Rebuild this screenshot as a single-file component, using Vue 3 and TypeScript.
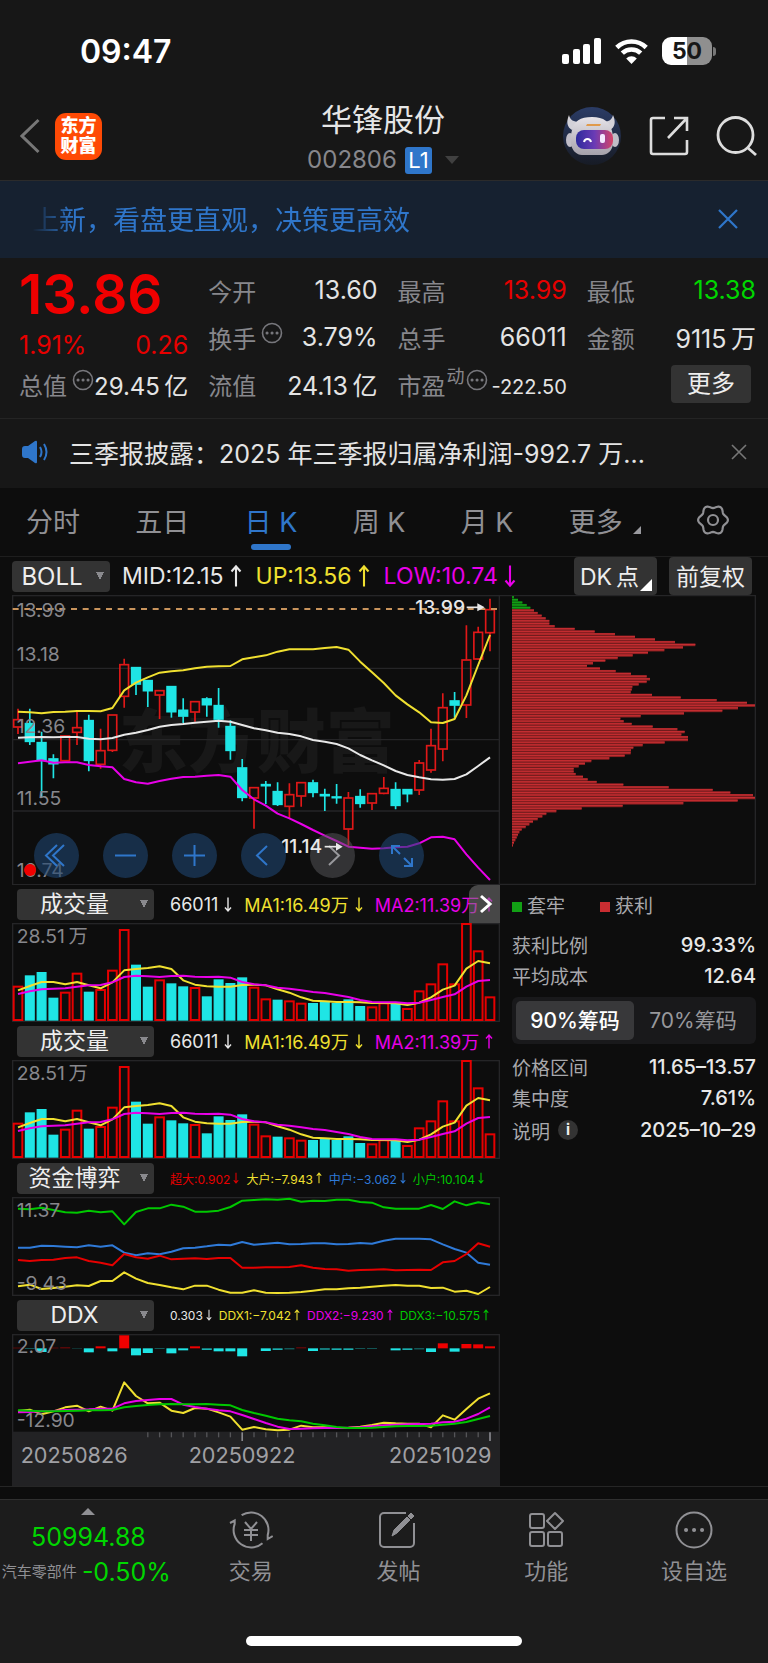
<script setup lang="ts">
import { ref } from 'vue'

type Candle = [kind: 'r' | 'c', high: number, top: number, bottom: number, low: number]

const START = 54
const STEP = 35.4
const xAt = (i: number): number => START + STEP * i
const line = (ys: number[]): string => ys.map((y, i) => `${xAt(i).toFixed(1)},${y}`).join(' ')

const candles: Candle[] = [
  ['r', 356, 388, 412, 432], ['c', 356, 400, 455, 465], ['c', 425, 457, 512, 622],
  ['c', 493, 506, 522, 565], ['r', 437, 437, 513, 513], ['r', 362, 412, 428, 465],
  ['c', 374, 391, 512, 544], ['r', 416, 481, 524, 536], ['r', 374, 374, 482, 486],
  ['r', 206, 223, 320, 353], ['c', 232, 232, 283, 315], ['c', 271, 271, 303, 351],
  ['r', 301, 301, 316, 387], ['c', 289, 289, 366, 383], ['c', 325, 360, 379, 399],
  ['r', 334, 334, 367, 395], ['c', 322, 326, 345, 380], ['c', 294, 346, 388, 413],
  ['c', 391, 409, 482, 509], ['c', 507, 533, 623, 634], ['r', 592, 592, 625, 716],
  ['c', 573, 583, 588, 642], ['c', 577, 604, 644, 648], ['r', 580, 613, 650, 685],
  ['r', 576, 577, 619, 650], ['c', 569, 578, 608, 622], ['c', 596, 613, 618, 663],
  ['c', 582, 620, 624, 641], ['r', 606, 623, 718, 767], ['c', 598, 619, 641, 653],
  ['r', 610, 610, 640, 660], ['r', 561, 594, 611, 613], ['c', 577, 598, 647, 658],
  ['c', 598, 598, 612, 637], ['r', 510, 518, 601, 615], ['r', 416, 466, 541, 548],
  ['r', 310, 352, 478, 514], ['c', 306, 332, 346, 383], ['r', 106, 209, 346, 384],
  ['r', 110, 126, 208, 209], ['r', 26, 58, 129, 184],
]

const bollUp = [365, 367, 370, 366, 365, 363, 363, 364, 354, 301, 278, 262, 248, 244, 241, 235, 230, 229, 228, 208, 202, 196, 185, 178, 178, 178, 174, 171, 179, 215, 247, 279, 316, 343, 367, 397, 399, 387, 316, 225, 135]
const bollMid = [443, 442, 441, 442, 441, 441, 446, 448, 444, 434, 428, 420, 410, 405, 402, 398, 395, 392, 395, 405, 415, 421, 428, 432, 439, 450, 455, 462, 475, 495, 511, 526, 543, 555, 562, 568, 569, 567, 553, 528, 502]
const bollLow = [520, 515, 511, 518, 517, 517, 525, 529, 532, 567, 577, 581, 573, 566, 561, 560, 557, 555, 560, 600, 628, 647, 671, 685, 702, 720, 737, 753, 770, 773, 776, 775, 772, 770, 760, 742, 740, 748, 793, 833, 870]

const volTops = [320, 288, 278, 355, 338, 281, 337, 330, 272, 150, 256, 322, 301, 312, 321, 324, 351, 300, 311, 294, 323, 358, 361, 364, 371, 371, 365, 371, 360, 380, 382, 370, 371, 387, 334, 313, 253, 313, 132, 214, 352]
const volKinds = 'rcccrrcrrrccrccrccccrrcrrcccccrrcrrrrrrrr'.split('')
const ma1 = [331, 318, 306, 306, 313, 306, 316, 325, 307, 271, 267, 264, 259, 267, 301, 314, 319, 320, 320, 315, 314, 316, 328, 338, 352, 362, 364, 366, 366, 367, 369, 369, 370, 375, 368, 352, 329, 317, 266, 243, 250]
const ma2 = [342, 334, 328, 326, 325, 320, 316, 315, 307, 291, 287, 289, 291, 288, 287, 290, 291, 290, 293, 306, 313, 316, 323, 326, 331, 336, 339, 345, 351, 360, 366, 367, 367, 370, 368, 360, 351, 343, 320, 303, 300]

const flowSmall = [144, 146, 141, 148, 155, 156, 150, 155, 152, 191, 154, 143, 143, 132, 138, 153, 153, 150, 139, 120, 118, 116, 117, 114, 123, 120, 121, 117, 117, 124, 126, 140, 144, 144, 144, 133, 145, 122, 134, 125, 131]
const flowMid = [261, 261, 255, 256, 258, 260, 254, 258, 254, 276, 284, 278, 281, 273, 263, 261, 257, 252, 254, 244, 252, 249, 246, 251, 250, 248, 248, 251, 250, 247, 249, 240, 234, 234, 234, 236, 251, 265, 276, 306, 312]
const flowHuge = [298, 301, 298, 297, 292, 290, 301, 306, 314, 280, 290, 294, 285, 296, 294, 293, 295, 292, 292, 321, 321, 320, 320, 319, 314, 321, 325, 326, 330, 328, 327, 326, 329, 328, 327, 328, 305, 301, 280, 248, 258]
const flowBig = [377, 372, 385, 382, 378, 374, 376, 361, 361, 335, 354, 367, 373, 380, 386, 375, 375, 387, 396, 396, 389, 396, 397, 396, 394, 390, 386, 386, 383, 381, 378, 375, 373, 375, 375, 382, 381, 393, 390, 400, 379]

const ddxBars = [-2, 2, 11, -2, -3, 1, 12, -6, 9, -39, 21, 14, 2, 15, 6, -6, 5, 9, 9, 24, 0, 8, 5, 3, -3, 8, 4, 5, 5, 2, 2, 0, 6, 5, 3, 11, -15, 10, -13, -12, -6]
const ddx1 = [302, 298, 312, 303, 291, 286, 303, 289, 301, 216, 257, 279, 277, 301, 308, 293, 295, 306, 319, 358, 350, 357, 360, 358, 346, 351, 351, 353, 352, 349, 344, 337, 339, 340, 340, 351, 315, 328, 296, 265, 249]
const ddx2 = [306, 305, 303, 302, 299, 298, 297, 295, 295, 279, 272, 269, 266, 266, 283, 290, 295, 300, 303, 314, 326, 338, 349, 356, 355, 354, 353, 353, 352, 351, 348, 345, 343, 342, 341, 340, 336, 334, 325, 311, 291]
const ddx3 = [300, 301, 303, 303, 302, 301, 300, 300, 299, 291, 287, 284, 282, 281, 282, 282, 281, 283, 285, 299, 308, 316, 325, 330, 333, 340, 345, 350, 353, 353, 352, 350, 348, 347, 347, 346, 343, 340, 335, 326, 317]
const ticks = Array.from({ length: 30 }, (_, i) => i + 11)

const chips = [42, 54, 67, 80, 91, 102, 113, 125, 137, 148, 148, 164, 224, 284, 345, 405, 465, 525, 586, 549, 493, 444, 398, 353, 316, 279, 261, 300, 347, 393, 440, 450, 440, 416, 397, 395, 392, 456, 542, 650, 741, 765, 714, 667, 552, 422, 361, 371, 395, 458, 532, 554, 544, 564, 564, 494, 428, 400, 393, 392, 374, 328, 274, 255, 236, 221, 221, 227, 249, 263, 290, 370, 506, 638, 691, 759, 765, 713, 550, 368, 245, 169, 139, 127, 113, 99, 88, 77, 65, 58, 54, 50, 46, 42, 39]

const priceLabels = [
  { text: '13.99', y: 80 }, { text: '13.18', y: 212 }, { text: '12.36', y: 429 },
  { text: '11.55', y: 644 }, { text: '10.74', y: 861 },
]

// Six-lobed outline of the settings gear
const gear = 'M' + Array.from({ length: 72 }, (_, i) => {
  const a = (i * Math.PI) / 36
  const r = 13.4 + 1.5 * Math.cos(6 * a)
  return `${(17 + r * Math.cos(a)).toFixed(2)} ${(16 + r * Math.sin(a)).toFixed(2)}`
}).join('L') + 'Z'

const tabs = ['分时', '五日', '日 K', '周 K', '月 K', '更多']
const activeTab = ref(tabs[2])
const range = ref(90)
const bannerOpen = ref(true)
const noticeOpen = ref(true)

interface Reading { text: string; dir: 'up' | 'down'; tone: string }
const boll: Reading[] = [
  { text: 'MID:12.15', dir: 'up', tone: 'white' },
  { text: 'UP:13.56', dir: 'up', tone: 'yellow' },
  { text: 'LOW:10.74', dir: 'down', tone: 'magenta' },
]
const volume: Reading[] = [
  { text: '66011', dir: 'down', tone: 'white' },
  { text: 'MA1:16.49万', dir: 'down', tone: 'yellow' },
  { text: 'MA2:11.39万', dir: 'up', tone: 'magenta' },
]
const flow: Reading[] = [
  { text: '超大:0.902', dir: 'down', tone: 'red' },
  { text: '大户:−7.943', dir: 'up', tone: 'yellow' },
  { text: '中户:−3.062', dir: 'down', tone: 'blue' },
  { text: '小户:10.104', dir: 'down', tone: 'green' },
]
const ddx: Reading[] = [
  { text: '0.303', dir: 'down', tone: 'white' },
  { text: 'DDX1:−7.042', dir: 'up', tone: 'yellow' },
  { text: 'DDX2:−9.230', dir: 'up', tone: 'magenta' },
  { text: 'DDX3:−10.575', dir: 'up', tone: 'green' },
]
const UP = 'M4 15V1.5M1 5l3-3.5L7 5'
const DOWN = 'M4 1v13.500M1 11l3 3.500L7 11'
</script>

<template>
  <div class="app">
    <header class="top">
      <div class="status">
        <span class="time">09:47</span>
        <div class="status-icons">
          <svg width="39" height="26" viewBox="0 0 39 26" fill="#fff">
            <rect x="0" y="16" width="7" height="10" rx="2" /><rect x="11" y="11" width="7" height="15" rx="2" />
            <rect x="21" y="6" width="7" height="20" rx="2" /><rect x="32" y="0" width="7" height="26" rx="2" />
          </svg>
          <svg width="33" height="25" viewBox="0 0 33 25" fill="none" stroke="#fff" stroke-width="4.600">
            <path d="M1.800 8.500a21 21 0 0 1 29.400 0" /><path d="M7.300 14.200a13.200 13.200 0 0 1 18.400 0" />
            <path d="M16.500 25l-5.300-5.500a7.500 7.500 0 0 1 10.600 0z" fill="#fff" stroke="none" />
          </svg>
          <div class="battery"><span class="charge"><b>50</b></span><i></i></div>
        </div>
      </div>
      <div class="nav">
        <div class="nav-left">
          <button class="bare" aria-label="返回">
            <svg width="20" height="36" viewBox="0 0 20 36" fill="none" stroke="#777" stroke-width="3"><path d="M18.500 2L2 18l16.500 16" /></svg>
          </button>
          <a class="logo" href="#home"><span>东方</span><span>财富</span></a>
        </div>
        <div class="title">
          <h1>华锋股份</h1>
          <button class="bare code">002806 <span class="level">L1</span>
            <svg width="14" height="8" viewBox="0 0 14 8" fill="#404040"><path d="M0 0h14L7 8z" /></svg>
          </button>
        </div>
        <div class="nav-right">
          <button class="bare" aria-label="助手">
            <svg width="60" height="60" viewBox="0 0 60 60">
              <defs>
                <linearGradient id="halo" x1="0" y1="0" x2="0" y2="1"><stop offset="0" stop-color="#2b3c66" /><stop offset="1" stop-color="#171b25" /></linearGradient>
                <linearGradient id="visor" x1="0" y1="0" x2="1" y2="0"><stop offset="0" stop-color="#2d2a9c" /><stop offset=".5" stop-color="#6a3bb5" /><stop offset="1" stop-color="#d54468" /></linearGradient>
                <linearGradient id="shell" x1="0" y1="0" x2="0" y2="1"><stop offset="0" stop-color="#e6e3e8" /><stop offset="1" stop-color="#a5a1ab" /></linearGradient>
              </defs>
              <circle cx="30" cy="30" r="29" fill="url(#halo)" />
              <path d="M7 9c-3 7-2 12 3 15l7-8c-5 0-9-2-10-7zM51 9c3 7 2 12-3 15l-7-8c5 0 9-2 10-7z" fill="#d3d1d8" />
              <ellipse cx="8" cy="34" rx="4" ry="7" fill="#c0bdc7" /><ellipse cx="53" cy="34" rx="4" ry="7" fill="#c0bdc7" />
              <path d="M30 11c12 0 18 5 20 14 3 12 1 23-10 24H20C9 48 7 36 10 24c2-9 8-13 20-13z" fill="url(#shell)" />
              <rect x="14" y="24" width="37" height="19" rx="8" fill="url(#visor)" />
              <path d="M22 36c1-4 6-4 7 0" fill="none" stroke="#fff" stroke-width="2" /><rect x="38" y="28" width="5" height="9" rx="2" fill="#f3e9ff" />
              <path d="M25 18h14l-1 2H24z" fill="#e09a4c" />
            </svg>
          </button>
          <button class="bare" aria-label="分享">
            <svg width="42" height="42" viewBox="0 0 42 42" fill="none" stroke="#ddd" stroke-width="2.600">
              <path d="M17 3H5a2 2 0 0 0-2 2v32a2 2 0 0 0 2 2h32a2 2 0 0 0 2-2V25" /><path d="M26 3h13v13M39 3L20 23" />
            </svg>
          </button>
          <button class="bare" aria-label="搜索">
            <svg width="42" height="42" viewBox="0 0 42 42" fill="none" stroke="#ddd" stroke-width="2.800">
              <circle cx="19.500" cy="20" r="17.500" /><path d="M32 33l8 7" />
            </svg>
          </button>
        </div>
      </div>
    </header>

    <div v-if="bannerOpen" class="banner">
      <a href="#new">上新，看盘更直观，决策更高效</a>
      <button class="bare" aria-label="关闭横幅" @click="bannerOpen = false">
        <svg width="20" height="20" viewBox="0 0 20 20" stroke="#2f76ca" stroke-width="2.200"><path d="M1 1l18 18M19 1L1 19" /></svg>
      </button>
    </div>

    <section class="quote">
      <div class="col">
        <strong class="price">13.86</strong>
        <div class="change"><span>1.91%</span><span>0.26</span></div>
        <div class="cell"><span class="label">总值</span><svg class="more-dot gap" width="22" height="22" viewBox="0 0 22 22"><circle cx="11" cy="11" r="9.500" /><path d="M6 11h.1M11 11h.1M16 11h.1" /></svg><span class="value tight">29.45&#8201;亿</span></div>
      </div>
      <div class="col">
        <div class="cell"><span class="label">今开</span><span class="value">13.60</span></div>
        <div class="cell"><span class="label">换手</span><svg class="more-dot gap" width="22" height="22" viewBox="0 0 22 22"><circle cx="11" cy="11" r="9.500" /><path d="M6 11h.1M11 11h.1M16 11h.1" /></svg><span class="value">3.79%</span></div>
        <div class="cell"><span class="label">流值</span><span class="value">24.13&#8201;亿</span></div>
      </div>
      <div class="col">
        <div class="cell"><span class="label">最高</span><span class="value rise">13.99</span></div>
        <div class="cell"><span class="label">总手</span><span class="value">66011</span></div>
        <div class="cell"><span class="label">市盈</span><sup class="sup">动</sup><svg class="more-dot" width="22" height="22" viewBox="0 0 22 22"><circle cx="11" cy="11" r="9.500" /><path d="M6 11h.1M11 11h.1M16 11h.1" /></svg><span class="value small">-222.50</span></div>
      </div>
      <div class="col">
        <div class="cell"><span class="label">最低</span><span class="value fall">13.38</span></div>
        <div class="cell"><span class="label">金额</span><span class="value">9115&#8201;万</span></div>
        <div class="cell"><button class="more">更多</button></div>
      </div>
    </section>

    <div v-if="noticeOpen" class="notice">
      <svg width="28" height="24" viewBox="0 0 28 24" fill="none" stroke="#2f76ca" stroke-width="2">
        <path d="M1 9q0-3 3-3h3l7-5q2-1 2 1v20q0 2-2 1l-7-5H4q-3 0-3-3z" fill="#2f76ca" stroke="none" /><path d="M19 7q3 5 0 10M23 4q5 8 0 16" />
      </svg>
      <a href="#report">三季报披露：2025 年三季报归属净利润-992.7 万...</a>
      <button class="bare" aria-label="关闭公告" @click="noticeOpen = false">
        <svg width="16" height="16" viewBox="0 0 16 16" stroke="#777" stroke-width="1.600"><path d="M1 1l14 14M15 1L1 15" /></svg>
      </button>
    </div>

    <nav class="tabs">
      <button v-for="t in tabs" :key="t" class="tab" :class="{ active: t === activeTab }" @click="activeTab = t">
        {{ t }}<svg v-if="t === '更多'" class="corner" width="8" height="8" viewBox="0 0 8 8"><path d="M8 0v8H0z" fill="#9a9a9f" /></svg>
      </button>
      <button class="tab" aria-label="设置">
        <svg width="34" height="32" viewBox="0 0 34 32" fill="none" stroke="#909094" stroke-width="2.200">
          <path :d="gear" stroke-linejoin="round" /><circle cx="17" cy="16" r="5" />
        </svg>
      </button>
    </nav>

    <div class="boll">
      <select class="pick boll-pick" aria-label="主图指标"><option>BOLL</option></select>
      <div class="readings big">
        <span v-for="r in boll" :key="r.text" :class="r.tone">{{ r.text }}<svg width="12" height="24" viewBox="0 0 8 16"><path :d="r.dir === 'up' ? UP : DOWN" /></svg></span>
      </div>
      <div class="boll-actions">
        <button class="chip-btn dk">DK&#8201;点<svg class="corner" width="12" height="12" viewBox="0 0 12 12"><path d="M12 0v12H0z" fill="#fff" /></svg></button>
        <button class="chip-btn">前复权</button>
      </div>
    </div>

    <main class="board">
      <div class="left">
        <div class="price-chart">
          <svg class="plot" viewBox="36 15 1464 870">
            <text class="watermark" x="356" y="530">东方财富</text>
            <path class="grid" d="M38 235H1498M38 449H1498M38 663H1498" />
            <rect class="frame" x="38" y="17" width="1460" height="867" />
            <g v-for="(c, i) in candles" :key="i" :class="c[0] === 'r' ? 'up-bar' : 'down-bar'">
              <path :d="`M${xAt(i)} ${c[1]}V${c[2]}M${xAt(i)} ${c[3]}V${c[4]}`" />
              <rect :x="xAt(i) - 13" :y="c[2] + 1" width="26" :height="c[3] - c[2] - 2" />
            </g>
            <path class="dash" d="M38 57H1498" />
            <polyline class="yellow" :points="line(bollUp)" />
            <polyline class="white" :points="line(bollMid)" />
            <polyline class="magenta" :points="line(bollLow)" />
            <text v-for="l in priceLabels" :key="l.text" class="axis" x="50" :y="l.y">{{ l.text }}</text>
          </svg>
          <div class="tools">
            <button aria-label="最早"><svg viewBox="0 0 45 45"><path d="M23 12L12 22.500 23 33M30 12L19 22.500 30 33" /></svg></button>
            <button aria-label="缩小"><svg viewBox="0 0 45 45"><path d="M12 22.500h21" /></svg></button>
            <button aria-label="放大"><svg viewBox="0 0 45 45"><path d="M12 22.500h21M22.500 12v21" /></svg></button>
            <button aria-label="向左"><svg viewBox="0 0 45 45"><path d="M26 13L16 22.500 26 32" /></svg></button>
            <button class="muted" aria-label="向右"><svg viewBox="0 0 45 45"><path d="M19 13l10 9.500L19 32" /></svg></button>
            <button aria-label="全屏"><svg viewBox="0 0 45 45"><path d="M13 21v-8h8M13 13l8 8M33 25v8h-8M33 33l-8-8" /></svg></button>
          </div>
          <svg class="plot marks" viewBox="36 15 1464 870">
            <text class="mark" x="1246" y="73">13.99</text><path d="M1400 52h38" /><path class="tip" d="M1432 40l22 12-22 12z" />
            <text class="mark" x="844" y="790">11.14</text><path d="M974 770h38" /><path class="tip" d="M1008 758l20 12-20 12z" />
            <circle cx="90" cy="840" r="18" fill="#f00000" />
          </svg>
        </div>

        <div v-for="n in 2" :key="n" class="pane">
          <div class="pane-head">
            <select class="pick" :aria-label="`副图指标 ${n}`"><option>成交量</option></select>
            <div class="readings mid">
              <span v-for="r in volume" :key="r.text" :class="r.tone">{{ r.text }}<svg width="8" height="17" viewBox="0 0 8 16"><path :d="r.dir === 'up' ? UP : DOWN" /></svg></span>
            </div>
            <button v-if="n === 1" class="expand" aria-label="展开">
              <svg width="14" height="20" viewBox="0 0 14 20" fill="none" stroke="#fff" stroke-width="3"><path d="M2 2l9 8-9 8" /></svg>
            </button>
          </div>
          <svg class="plot" viewBox="36 129 1464 297">
            <rect class="frame" x="38" y="131" width="1460" height="293" />
            <g v-for="(t, i) in volTops" :key="i" :class="volKinds[i] === 'r' ? 'vol-up' : 'vol-down'">
              <rect :x="xAt(i) - 13" :y="t" width="26" :height="420 - t" />
            </g>
            <polyline class="yellow" :points="line(ma1)" /><polyline class="magenta" :points="line(ma2)" />
            <text class="axis" x="50" y="189">28.51&#8201;万</text>
          </svg>
        </div>

        <div class="pane">
          <div class="pane-head">
            <select class="pick" aria-label="副图指标 3"><option>资金博弈</option></select>
            <div class="readings tiny">
              <span v-for="r in flow" :key="r.text" :class="r.tone">{{ r.text }}<svg width="6" height="12" viewBox="0 0 8 16"><path :d="r.dir === 'up' ? UP : DOWN" /></svg></span>
            </div>
          </div>
          <svg class="plot" viewBox="36 109 1464 297">
            <rect class="frame" x="38" y="111" width="1460" height="293" />
            <polyline class="green" :points="line(flowSmall)" /><polyline class="blue" :points="line(flowMid)" />
            <polyline class="red" :points="line(flowHuge)" /><polyline class="yellow" :points="line(flowBig)" />
            <text class="axis" x="50" y="168">11.37</text><text class="axis" x="50" y="388">-9.43</text>
          </svg>
        </div>

        <div class="pane">
          <div class="pane-head">
            <select class="pick" aria-label="副图指标 4"><option>DDX</option></select>
            <div class="readings tiny">
              <span v-for="r in ddx" :key="r.text" :class="r.tone">{{ r.text }}<svg width="6" height="12" viewBox="0 0 8 16"><path :d="r.dir === 'up' ? UP : DOWN" /></svg></span>
            </div>
          </div>
          <svg class="plot" viewBox="36 71 1464 456">
            <rect class="frame" x="38" y="73" width="1460" height="300" />
            <rect x="36" y="364" width="1464" height="163" fill="#222224" />
            <rect v-for="(b, i) in ddxBars" :key="i" :x="xAt(i) - 15" :y="b < 0 ? 114 + b : 114" width="30" :height="Math.abs(b)" :fill="b < 0 ? '#f00000' : '#1fe5e5'" :opacity="Math.abs(b) < 4 ? 0.5 : Math.abs(b) < 6 ? 0.75 : 1" />
            <polyline class="yellow" :points="line(ddx1)" /><polyline class="magenta" :points="line(ddx2)" /><polyline class="green" :points="line(ddx3)" />
            <text class="axis" x="50" y="128">2.07</text><text class="axis" x="50" y="349">-12.90</text>
            <path v-for="t in ticks" :key="t" class="tick" :class="{ major: t === 19 || t === 40 }" :d="`M${xAt(t)} 366V${t === 19 || t === 40 ? 392 : 381}`" />
            <text class="date" x="62" y="457">20250826</text><text class="date" x="726" y="457" text-anchor="middle">20250922</text><text class="date" x="1474" y="457" text-anchor="end">20251029</text>
          </svg>
        </div>
      </div>

      <aside class="right">
        <svg class="plot" viewBox="0 15 768 870">
          <path class="frame" d="M0 17H766V883H0" />
          <g v-for="(c, i) in chips" :key="i">
            <rect x="36" :y="18 + i * 7.92" :width="c - 36" height="8" :fill="i < 5 ? '#0d7010' : '#8a2022'" />
            <rect x="36" :y="19 + i * 7.92" :width="c - 36" height="4" :fill="i < 5 ? '#12a015' : '#c42d31'" />
          </g>
        </svg>
        <div class="info">
          <div class="legend"><span class="trapped">套牢</span><span class="profit">获利</span></div>
          <dl>
            <div><dt>获利比例</dt><dd>99.33%</dd></div>
            <div><dt>平均成本</dt><dd>12.64</dd></div>
          </dl>
          <div class="segment">
            <button :class="{ on: range === 90 }" @click="range = 90">90%筹码</button>
            <button :class="{ on: range === 70 }" @click="range = 70">70%筹码</button>
          </div>
          <dl>
            <div><dt>价格区间</dt><dd>11.65–13.57</dd></div>
            <div><dt>集中度</dt><dd>7.61%</dd></div>
            <div class="note"><dt>说明<button class="bare tip-btn" aria-label="查看说明">i</button></dt><dd>2025–10–29</dd></div>
          </dl>
        </div>
      </aside>
    </main>

    <footer class="bottom">
      <div class="bar">
        <a class="sector" href="#sector">
          <svg width="14" height="7" viewBox="0 0 14 7" fill="#909094"><path d="M7 0l7 7H0z" /></svg>
          <span class="index">50994.88</span>
          <span class="drop"><small>汽车零部件</small>-0.50%</span>
        </a>
        <a class="item" href="#trade">
          <svg viewBox="0 0 44 40"><path d="M12.600 5.200A17.500 17.500 0 0 1 38.700 25.100V29l5-3M33.500 33.200A17.500 17.500 0 0 1 5.700 13.800V10.500L1 13M16 12l6 7 6-7M22 19v12M15 20h14M15 25h14" /></svg><span>交易</span>
        </a>
        <a class="item" href="#post">
          <svg viewBox="0 0 44 40"><path d="M30 3H8a4 4 0 0 0-4 4v26a4 4 0 0 0 4 4h26a4 4 0 0 0 4-4V13" /><path d="M16 26l2-6L31 7l3 3-13 13zM32 6l3-3 3 3-3 3z" fill="#909094" stroke-width="1" /></svg><span>发帖</span>
        </a>
        <a class="item" href="#features">
          <svg viewBox="0 0 44 40"><rect x="6" y="4" width="14" height="14" rx="2" /><rect x="6" y="22" width="14" height="14" rx="2" /><rect x="24" y="22" width="14" height="14" rx="2" /><path d="M31 3l8 8-8 8-8-8z" stroke-linejoin="round" /></svg><span>功能</span>
        </a>
        <a class="item" href="#watch">
          <svg viewBox="0 0 44 40"><circle cx="22" cy="20" r="17.500" /><path d="M14 20h.1M22 20h.1M30 20h.1" stroke-width="4" stroke-linecap="round" /></svg><span>设自选</span>
        </a>
      </div>
      <div class="home"></div>
    </footer>
  </div>
</template>

<style>
body { margin: 0; background: #0d0d0d; }
</style>

<style scoped>
* { box-sizing: border-box; }
.app { min-height: 100vh; background: #0d0d0d; color: #e4e4e4; font-family: Inter, "Noto Sans CJK SC", sans-serif; display: flex; flex-direction: column; }
svg { display: block; flex: none; }
button, select { font-family: inherit; border: 0; margin: 0; cursor: pointer; }
a { color: inherit; text-decoration: none; }
.bare { background: none; padding: 0; color: inherit; }

.top { background: #171717; border-bottom: 1px solid #2b2b2b; height: 181px; }
.status { height: 100px; padding: 2px 52px 0 80px; display: flex; align-items: center; justify-content: space-between; }
.time { font-size: 32px; font-weight: 600; color: #fff; }
.status-icons { display: flex; align-items: center; gap: 14px; }
.battery { display: flex; align-items: center; gap: 1px; }
.charge { width: 50px; height: 28px; border-radius: 9px; background: linear-gradient(90deg, #fff 50%, #8f8f8f 50%); display: grid; place-items: center; color: #171717; font-size: 23px; line-height: 28px; }
.charge b { font-weight: 700; }
.battery i { width: 3px; height: 9px; border-radius: 0 3px 3px 0; background: #777; }
.nav { height: 80px; padding: 0 10px 0 20px; display: grid; grid-template-columns: 1fr auto 1fr; align-items: start; }
.nav-left, .nav-right { height: 72px; }
.nav-left { display: flex; align-items: center; gap: 15px; }
.logo { width: 47px; height: 47px; border-radius: 11px; background: #ff4a05; color: #fff; font-size: 18px; font-weight: 900; line-height: 20px; display: flex; flex-direction: column; align-items: center; justify-content: center; }
.title { display: flex; flex-direction: column; align-items: center; margin-right: 12px; }
h1 { margin: 0; font-size: 31px; font-weight: 400; line-height: 40px; color: #e6e6e6; }
.code { display: flex; align-items: center; gap: 8px; font-size: 24px; line-height: 40px; color: #87878c; }
.level { background: #2f76ca; color: #fff; border-radius: 3px; width: 27px; line-height: 27px; font-size: 22px; text-align: center; }
.code svg { margin-left: 5px; }
.nav-right { display: flex; align-items: center; justify-content: flex-end; gap: 26px; }

.banner { height: 77px; background: #162130; display: flex; align-items: center; justify-content: space-between; padding: 0 30px 2px 32px; color: #2f76ca; }
.banner a { font-size: 27px; -webkit-mask-image: linear-gradient(90deg, transparent, #000 40px); mask-image: linear-gradient(90deg, transparent, #000 40px); }

.quote { height: 161px; background: #171717; border-bottom: 1px solid #242424; padding: 9px 12px 0 19px; display: grid; grid-template-columns: repeat(4, 1fr); gap: 20px; }
.col { display: flex; flex-direction: column; min-width: 0; }
.price { font-size: 55px; font-weight: 600; line-height: 54px; color: #f00000; }
.change { display: flex; justify-content: space-between; font-size: 25px; line-height: 36px; color: #e60000; padding-top: 6px; height: 40px; }
.cell { height: 47px; display: flex; align-items: center; white-space: nowrap; padding-bottom: 1px; }
.label { font-size: 24px; color: #87878c; }
.value { margin-left: auto; font-size: 25px; }
.value.tight { font-size: 24px; }
.value.small { font-size: 20px; padding-top: 6px; }
.rise { color: #e60000; }
.fall { color: #00d600; }
.more-dot { fill: none; stroke: #77777c; stroke-width: 1.600; margin: -8px 0 0 1px; }
.more-dot path { stroke-width: 3; stroke-linecap: round; }
.more-dot.gap { margin-left: 5px; }
.sup { font-size: 18px; line-height: 18px; color: #87878c; align-self: flex-start; padding: 7px 0 0 1px; vertical-align: baseline; }
.more { margin-left: auto; margin-right: 5px; width: 80px; height: 38px; border-radius: 4px; background: #333; color: #eee; font-size: 24px; line-height: 34px; padding: 0; }

.notice { height: 69px; background: #171717; padding: 0 21px 3px; display: flex; align-items: center; }
.notice a { flex: 1; min-width: 0; margin: 0 24px 0 20px; font-size: 25px; white-space: nowrap; overflow: hidden; }

.tabs { height: 69px; border-bottom: 1px solid #1e1e1e; display: flex; align-items: stretch; justify-content: space-between; padding: 0 38px 0 26px; }
.tab { background: none; padding: 0 0 4px; color: #909094; font-size: 27px; position: relative; display: flex; align-items: center; }
.tab.active { color: #2f76ca; }
.tab.active::after { content: ""; position: absolute; bottom: 6px; left: 50%; width: 40px; height: 6px; margin-left: -20px; border-radius: 3px; background: #2f76ca; }
.tab .corner { margin: 20px 0 0 10px; }

.boll { min-height: 38px; padding: 0 16px 0 12px; display: flex; align-items: center; }
.pick { appearance: none; background-color: #333; color: #eee; border-radius: 4px; width: 137px; height: 31px; padding: 0 22px 0 0; font-size: 23px; line-height: 31px; text-align: center; text-align-last: center; background-image: linear-gradient(to bottom right, #8a8a8e 50%, transparent 50%), linear-gradient(to bottom left, #8a8a8e 50%, transparent 50%); background-size: 4px 8px; background-repeat: no-repeat; background-position: right 10px center, right 6px center; background-image: linear-gradient(to bottom left, #8a8a8e 50%, transparent 50%), linear-gradient(to bottom right, #8a8a8e 50%, transparent 50%); flex: none; }
.boll-pick { width: 98px; padding: 0 18px 0 0; font-size: 24px; }
.readings { display: flex; align-items: center; white-space: nowrap; }
.readings span { display: flex; align-items: center; color: var(--tone); }
.readings svg { fill: none; stroke: var(--tone); stroke-width: 1.400; }
.big { font-size: 23px; gap: 14px; margin-left: 12px; }
.big svg { margin-left: 6px; }
.mid { font-size: 18px; gap: 12px; margin-left: 16px; }
.mid svg { margin-left: 6px; }
.tiny { font-size: 12px; gap: 7px; margin-left: 16px; }
.tiny svg { margin-left: 3px; }
.white { --tone: #e8e8e8; }
.yellow { --tone: #f0e030; }
.magenta { --tone: #e800e8; }
.red { --tone: #e60000; }
.green { --tone: #00c800; }
.blue { --tone: #2f7ad8; }
.boll-actions { margin-left: auto; display: flex; gap: 12px; }
.chip-btn { background: #333; color: #eee; border-radius: 4px; width: 83px; height: 38px; padding: 0 0 2px; font-size: 23px; white-space: nowrap; position: relative; }
.chip-btn.dk { padding-right: 12px; }
.chip-btn .corner { position: absolute; right: 5px; bottom: 4px; }

.board { display: grid; grid-template-columns: minmax(0, 488fr) minmax(0, 256fr); padding: 0 12px; border-bottom: 1px solid #262626; }
.plot { width: 100%; height: auto; }
.price-chart { position: relative; }
.marks { position: absolute; inset: 0; pointer-events: none; }
.marks path { stroke: #e8e8e8; stroke-width: 5; }
.marks .tip { fill: #e8e8e8; stroke: none; }
.mark { font-size: 58px; fill: #e8e8e8; font-weight: 500; }
.frame, .grid { fill: none; stroke: #252527; stroke-width: 4; }
.axis { font-size: 58px; fill: #87878c; }
.date { font-size: 65px; fill: #a0a0a4; }
.watermark { font-size: 207px; font-weight: 900; fill: #181818; }
.dash { stroke: #c9945c; stroke-width: 6; stroke-dasharray: 18 17; }
.up-bar { fill: none; stroke: #e01818; stroke-width: 5; }
.down-bar { fill: #1fe5e5; stroke: #1fe5e5; stroke-width: 5; }
.vol-up { fill: none; stroke: #e60000; stroke-width: 6; }
.vol-down { fill: #1fe5e5; stroke: #1fe5e5; stroke-width: 4; }
polyline { fill: none; stroke: var(--tone); stroke-width: 6; stroke-linejoin: round; }
.tick { stroke: #555558; stroke-width: 4; }
.tick.major { stroke: #87878c; stroke-width: 5; }
.tools { position: absolute; left: 22px; bottom: 7px; display: flex; gap: 24px; }
.tools button { width: 45px; height: 45px; padding: 0; border-radius: 50%; background: rgba(30, 68, 112, 0.6); }
.tools svg { width: 45px; height: 45px; fill: none; stroke: #2f76ca; stroke-width: 2; }
.tools .muted { background: rgba(90, 90, 94, 0.5); }
.tools .muted svg { stroke: #98989c; }
.pane-head { height: 38px; padding: 0 0 0 5px; display: flex; align-items: center; position: relative; }
.expand { position: absolute; right: 0; top: 0; width: 31px; height: 38px; border-radius: 9px 0 0 0; background: rgba(120, 120, 120, 0.55); padding: 0 0 0 10px; }

.info { padding: 12px 0 0 12px; font-size: 19px; }
.legend { display: grid; grid-template-columns: 88px 1fr; line-height: 20px; color: #a8a8ac; margin-bottom: 12px; }
.legend span { display: flex; align-items: center; gap: 5px; }
.legend span::before { content: ""; width: 10px; height: 10px; background: #12a015; }
.legend .profit::before { background: #c92d31; }
dl { margin: 0; }
dl div { display: flex; justify-content: space-between; height: 31px; align-items: center; }
dl .note { padding-top: 3px; }
dt { color: #a8a8ac; display: flex; align-items: center; }
dd { margin: 0; font-weight: 500; font-size: 20px; color: #e8e8e8; }
.segment { display: flex; height: 47px; background: #19191b; border-radius: 6px; padding: 4px; margin: 6px 0 7px; }
.segment button { flex: 1; background: none; border-radius: 5px; color: #98989c; font-size: 21px; line-height: 38px; padding: 0; white-space: nowrap; }
.segment .on { background: #38383a; color: #fff; font-weight: 500; }
.tip-btn { width: 20px; height: 20px; border-radius: 50%; background: #333; color: #eee; font-weight: 700; font-size: 15px; line-height: 20px; margin-left: 8px; }

.bottom { margin-top: 12px; flex: 1; background: #1c1c1c; border-top: 1px solid #303030; min-height: 165px; }
.bar { display: flex; height: 100px; }
.sector { flex: 177; display: flex; flex-direction: column; align-items: center; padding-top: 8px; color: #00d600; white-space: nowrap; min-width: 0; }
.index { font-size: 25px; line-height: 28px; margin-top: 8px; }
.drop { display: flex; align-items: center; gap: 5px; font-size: 25px; line-height: 34px; margin-top: 4px; padding-right: 4px; }
.drop small { font-size: 15px; color: #909094; }
.item { flex: 148; display: flex; flex-direction: column; align-items: center; padding-top: 10px; color: #909094; font-size: 22px; }
.item svg { width: 44px; height: 40px; fill: none; stroke: #909094; stroke-width: 2; }
.item span { line-height: 34px; margin-top: 4px; }
.home { width: 36%; height: 10px; border-radius: 5px; background: #fff; margin: 36px auto 0; }
</style>
